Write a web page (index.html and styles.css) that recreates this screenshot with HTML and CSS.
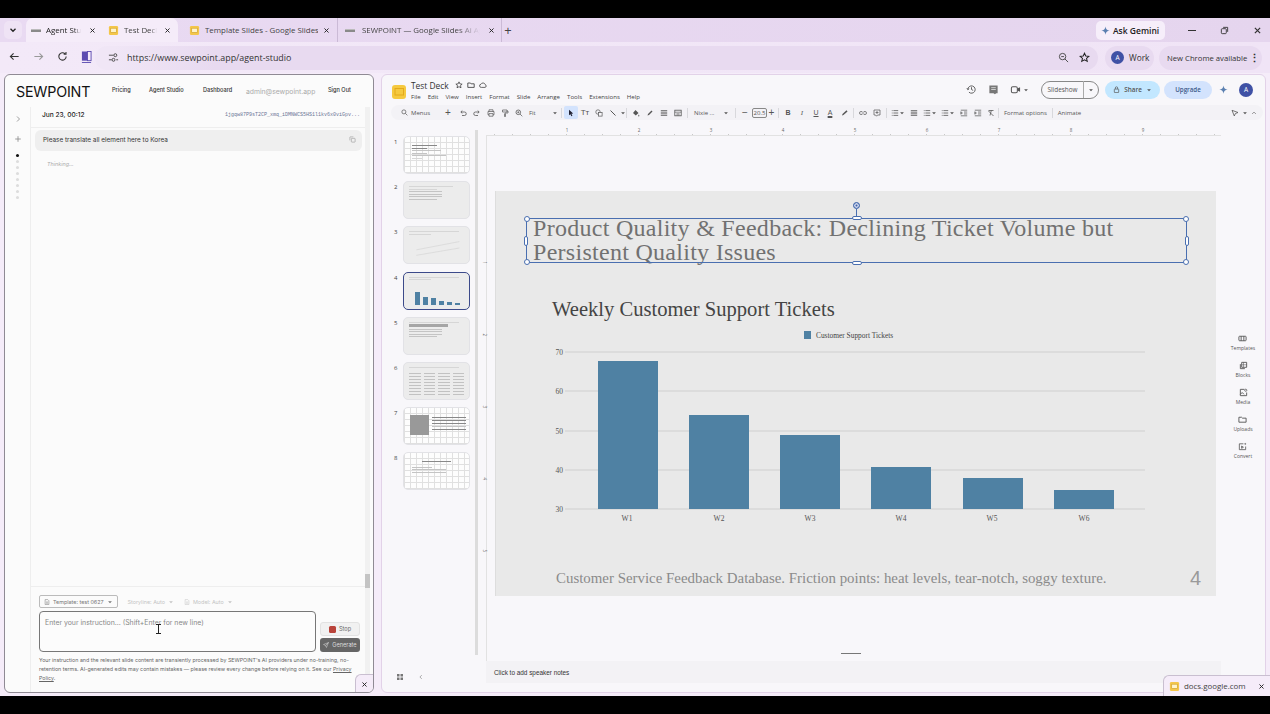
FILE: index.html
```html
<!DOCTYPE html>
<html lang="en">
<head>
    <meta charset="UTF-8">
    <title>Agent Studio</title>
    <link rel="stylesheet" href="styles.css">
</head>
<body>
<svg class="defs" width="0" height="0">
    <symbol id="close" viewBox="0 0 12 12"><path d="M2.5 2.5l7 7M9.5 2.5l-7 7" fill="none" stroke="currentColor" stroke-width="1.6"/></symbol>
    <symbol id="chev" viewBox="0 0 8 8"><path d="M1.5 2.8L4 5.3l2.5-2.5" fill="none" stroke="currentColor" stroke-width="1.3"/></symbol>
    <symbol id="spark" viewBox="0 0 12 12"><path d="M6 .5C6.4 3.8 8.2 5.600 11.5 6 8.2 6.4 6.4 8.2 6 11.5 5.6 8.2 3.8 6.4.5 6 3.8 5.6 5.6 3.8 6 .5z" fill="currentColor"/></symbol>
    <symbol id="star" viewBox="0 0 12 12"><path d="M6 1.3l1.4 3.100 3.300.3-2.500 2.200.8 3.300L6 8.500l-3 1.700.8-3.300-2.500-2.200 3.300-.3z" fill="none" stroke="currentColor" stroke-width="1.1"/></symbol>
    <symbol id="caret" viewBox="0 0 8 8"><path d="M1.5 3h5L4 5.800z" fill="currentColor"/></symbol>
    <symbol id="fav" viewBox="0 0 12 12"><rect x="1" y="1" width="10" height="10" rx="1.5" fill="#f4c64a"/><rect x="3" y="3.5" width="6" height="4.5" fill="#fff3c9" stroke="#c99a22" stroke-width=".6"/></symbol>
    <symbol id="lines" viewBox="0 0 10 10"><path d="M1 2h8M1 4h8M1 6h8M1 8h8" stroke="currentColor" stroke-width="1"/></symbol>
    <symbol id="list" viewBox="0 0 10 10"><path d="M3 2h6M3 5h6M3 8h6M1 2h1M1 5h1M1 8h1" stroke="currentColor" stroke-width="1"/></symbol>
    <symbol id="indent" viewBox="0 0 10 10"><path d="M1 1.5h8M5 3.8h4M5 6.2h4M1 8.5h8M1 3.5L3 5 1 6.5z" stroke="currentColor" stroke-width=".9" fill="none"/></symbol>
    <symbol id="doc" viewBox="0 0 8 8"><path d="M1.5 .8H5l1.500 1.500v5h-5zM2.700 4h2.600M2.700 5.500h2.600" fill="none" stroke="currentColor" stroke-width=".7"/></symbol>
</svg>

<div class="browser">
    <div class="tabstrip">
        <div class="tab-menu"><svg class="ic8"><use href="#chev"/></svg></div>
        <div class="tab tab-a active"><span class="dash"></span><span class="tab-title">Agent Studio</span><svg class="ic7"><use href="#close"/></svg></div>
        <div class="tab tab-b active"><svg class="ic11"><use href="#fav"/></svg><span class="tab-title">Test Deck</span><svg class="ic7"><use href="#close"/></svg></div>
        <div class="tab tab-c"><svg class="ic11"><use href="#fav"/></svg><span class="tab-title">Template Slides - Google Slides</span><svg class="ic7"><use href="#close"/></svg></div>
        <div class="tab tab-d"><span class="dash"></span><span class="tab-title">SEWPOINT — Google Slides Ai Agent</span><svg class="ic7"><use href="#close"/></svg></div>
        <span class="new-tab">+</span>
        <div class="gemini-chip"><svg class="ic9 spark"><use href="#spark"/></svg>Ask Gemini</div>
        <div class="win-btns">
            <span class="win-min"></span>
            <svg class="ic9" viewBox="0 0 10 10"><rect x="1.5" y="3" width="5.5" height="5.5" rx="1" fill="none" stroke="currentColor"/><path d="M3.5 1.5h5v5" fill="none" stroke="currentColor"/></svg>
            <svg class="ic9"><use href="#close"/></svg>
        </div>
    </div>

    <div class="toolbar">
        <div class="nav-btns">
            <svg class="ic11" viewBox="0 0 12 12"><path d="M10.5 6h-9M5 2.500L1.5 6 5 9.5" fill="none" stroke="currentColor" stroke-width="1.2"/></svg>
            <svg class="ic11 dim" viewBox="0 0 12 12"><path d="M1.5 6h9M7 2.500L10.5 6 7 9.5" fill="none" stroke="currentColor" stroke-width="1.2"/></svg>
            <svg class="ic11" viewBox="0 0 12 12"><path d="M10 6a4 4 0 1 1-1.200-2.900M9.800 1v2.500H7.300" fill="none" stroke="currentColor" stroke-width="1.2"/></svg>
            <svg class="ic11 sidepanel" viewBox="0 0 12 14"><rect x="1" y="1" width="6" height="10" fill="#5b4bb0"/><rect x="7" y="1" width="4" height="10" fill="none" stroke="#5b4bb0"/><path d="M1 13h10" stroke="#5b4bb0"/></svg>
        </div>
        <div class="omnibox">
            <svg class="ic11 tune" viewBox="0 0 12 12"><path d="M1 3.500h5M9 8.500h2M1 8.500h3" stroke="currentColor" stroke-width="1"/><circle cx="8" cy="3.5" r="1.6" fill="none" stroke="currentColor"/><circle cx="6" cy="8.5" r="1.6" fill="none" stroke="currentColor"/></svg>
            <span class="url">https://www.sewpoint.app/agent-studio</span>
            <svg class="ic11 omni-zoom" viewBox="0 0 12 12"><circle cx="5" cy="5" r="3.5" fill="none" stroke="currentColor"/><path d="M7.500 7.500l3.500 3.500M3.500 5h3" stroke="currentColor"/></svg>
            <svg class="ic11 omni-star"><use href="#star"/></svg>
        </div>
        <div class="chip chip-work"><span class="avatar">A</span>Work</div>
        <div class="chip chip-update">New Chrome available<span class="dots">⋮</span></div>
    </div>

    <div class="content">
        <section class="agent">
            <header class="agent-head">
                <span class="logo">SEWPOINT</span>
                <nav class="agent-nav">
                    <a class="nav-pricing">Pricing</a>
                    <a class="nav-studio">Agent Studio</a>
                    <a class="nav-dash">Dashboard</a>
                    <a class="nav-mail">admin@sewpoint.app</a>
                    <a>Sign Out</a>
                </nav>
            </header>
            <div class="agent-body">
                <aside class="rail">
                    <svg class="rail-ic" viewBox="0 0 8 8"><path d="M3 1.500L5.500 4 3 6.500" fill="none" stroke="currentColor" stroke-width=".8"/></svg>
                    <svg class="rail-ic plus" viewBox="0 0 8 8"><path d="M4 1.200v5.600M1.200 4h5.600" stroke="currentColor" stroke-width=".8"/></svg>
                    <div class="rail-dots">
                        <i class="on"></i><i></i><i></i><i></i><i></i><i></i><i></i><i></i>
                    </div>
                </aside>
                <div class="thread">
                    <div class="thread-head">
                        <span class="thread-date">Jun 23, 00:12</span>
                        <span class="thread-id">1jgqw87P9sT2CP_xmq_iDMNWCS5HS1l1kv6x0viGpv...</span>
                    </div>
                    <div class="prompt">
                        <span>Please translate all element here to Korea</span>
                        <svg class="copy" viewBox="0 0 8 8"><rect x="2.7" y="2.7" width="4.3" height="4.3" rx=".6" fill="none" stroke="currentColor" stroke-width=".7"/><path d="M1 5V1.500A.5.5 0 0 1 1.500 1H5" fill="none" stroke="currentColor" stroke-width=".7"/></svg>
                    </div>
                    <p class="thinking">Thinking...</p>
                    <div class="composer">
                        <div class="pickers">
                            <span class="picker picker-on"><svg class="ic6"><use href="#doc"/></svg>Template: test 0627<svg class="ic6"><use href="#caret"/></svg></span>
                            <span class="picker">Storyline: Auto<svg class="ic6"><use href="#caret"/></svg></span>
                            <span class="picker"><svg class="ic6"><use href="#doc"/></svg>Model: Auto<svg class="ic6"><use href="#caret"/></svg></span>
                        </div>
                        <div class="input-row">
                            <div class="input">Enter your instruction... (Shift+Enter for new line)<span class="beam"></span></div>
                            <div class="actions">
                                <button class="btn-stop"><i></i>Stop</button>
                                <button class="btn-gen"><svg class="ic6" viewBox="0 0 8 8"><path d="M7.300.7L.7 3.400l2.600 1.300L4.600 7.300zM3.300 4.700L7.300.7" fill="none" stroke="currentColor" stroke-width=".7"/></svg>Generate</button>
                            </div>
                        </div>
                        <p class="legal">Your instruction and the relevant slide content are transiently processed by SEWPOINT's AI providers under no-training, no-retention terms. AI-generated edits may contain mistakes — please review every change before relying on it. See our <u>Privacy Policy</u>.</p>
                    </div>
                </div>
                <div class="agent-scroll"><i></i></div>
            </div>
            <div class="notch notch-left"><svg class="ic7"><use href="#close"/></svg></div>
        </section>

        <section class="slides">
            <header class="slides-head">
                <svg class="deck-logo" viewBox="0 0 14 14"><rect width="14" height="14" rx="3" fill="#f5c93f"/><rect x="3" y="3.5" width="8.5" height="6.5" fill="none" stroke="#e3a91b"/></svg>
                <div class="deck-title">
                    <div class="deck-name">Test Deck
                        <svg class="ic8"><use href="#star"/></svg>
                        <svg class="ic8" viewBox="0 0 10 10"><path d="M1 2.500h3l1 1h4v4.500H1z" fill="none" stroke="currentColor"/></svg>
                        <svg class="ic8" viewBox="0 0 10 10"><path d="M3 8h4.500a1.800 1.800 0 0 0 .2-3.500A2.800 2.800 0 0 0 2.500 4 2 2 0 0 0 3 8z" fill="none" stroke="currentColor" stroke-width=".9"/></svg>
                    </div>
                    <div class="deck-menu">
                        <span>File</span><span>Edit</span><span>View</span><span>Insert</span><span>Format</span><span>Slide</span><span>Arrange</span><span>Tools</span><span>Extensions</span><span>Help</span>
                    </div>
                </div>
                <div class="deck-actions">
                    <svg class="ic11" viewBox="0 0 12 12"><path d="M2 6a4 4 0 1 1 1.200 2.900M1 4.500L2 6.200 3.500 5M6 3.500V6l1.800 1" fill="none" stroke="currentColor"/></svg>
                    <svg class="ic11" viewBox="0 0 12 12"><path d="M1.500 1.500h9v8.500H9L7.500 11.200 6 10H1.500z" fill="#777"/><path d="M3.500 4h5M3.500 6h5" stroke="#fff" stroke-width=".7"/></svg>
                    <span class="meet"><svg class="ic11" viewBox="0 0 12 12"><rect x="1.5" y="3" width="6.5" height="6.5" rx="1.5" fill="none" stroke="currentColor" stroke-width="1.1"/><path d="M8 5l3-1.500v5L8 7z" fill="currentColor"/></svg><svg class="ic6"><use href="#caret"/></svg></span>
                    <div class="slideshow"><span>Slideshow</span><span class="slideshow-arrow"><svg class="ic6"><use href="#caret"/></svg></span></div>
                    <div class="share"><svg class="ic7" viewBox="0 0 8 8"><rect x="1.5" y="3.5" width="5" height="4" rx=".6" fill="none" stroke="currentColor" stroke-width=".8"/><path d="M2.700 3.500V2.200a1.300 1.300 0 0 1 2.600 0v1.300" fill="none" stroke="currentColor" stroke-width=".8"/></svg><span>Share</span><svg class="ic6"><use href="#caret"/></svg></div>
                    <div class="upgrade">Upgrade</div>
                    <svg class="ic9 spark"><use href="#spark"/></svg>
                    <span class="avatar avatar-lg">A</span>
                </div>
            </header>

            <div class="tools">
                <span class="tools-search"><svg class="ic7" viewBox="0 0 8 8"><circle cx="3.3" cy="3.3" r="2.3" fill="none" stroke="currentColor" stroke-width=".8"/><path d="M5 5l2.300 2.300" stroke="currentColor" stroke-width=".8"/></svg>Menus</span>
                <span class="t t-plus">+</span>
                <span class="t"><svg class="ic8" viewBox="0 0 8 8"><path d="M2 3h3.500a1.500 1.500 0 0 1 0 3.500H3M3.300 1.600L1.800 3l1.500 1.400" fill="none" stroke="currentColor" stroke-width=".8"/></svg></span>
                <span class="t"><svg class="ic8" viewBox="0 0 8 8"><path d="M6 3H2.500a1.500 1.500 0 0 0 0 3.500H5M4.700 1.600L6.200 3 4.700 4.400" fill="none" stroke="currentColor" stroke-width=".8"/></svg></span>
                <span class="t"><svg class="ic8" viewBox="0 0 8 8"><path d="M2 2.500V.8h4v1.700M2 5.800H1V2.500h6v3.300H6M2 4.600h4v2.600H2z" fill="none" stroke="currentColor" stroke-width=".7"/></svg></span>
                <span class="t"><svg class="ic8" viewBox="0 0 8 8"><path d="M1.500 1h4.500v2H1.500zM6 2h1v2H4v1.200M3.500 5.200h1v2.300h-1z" fill="none" stroke="currentColor" stroke-width=".7"/></svg></span>
                <span class="t"><svg class="ic8" viewBox="0 0 8 8"><circle cx="3.3" cy="3.3" r="2.3" fill="none" stroke="currentColor" stroke-width=".8"/><path d="M5 5l2.300 2.300M2.300 3.300h2M3.300 2.300v2" stroke="currentColor" stroke-width=".7"/></svg></span>
                <span class="fit">Fit<svg class="ic6"><use href="#caret"/></svg></span>
                <i class="sep"></i>
                <span class="t t-on"><svg class="ic8" viewBox="0 0 8 8"><path d="M2 .8l4.200 3.700-1.800.2 1 2-1 .5-1-2L2 6.300z" fill="currentColor"/></svg></span>
                <span class="t t-text">Tт</span>
                <span class="t"><svg class="ic8" viewBox="0 0 8 8"><circle cx="3" cy="3" r="2.2" fill="none" stroke="currentColor" stroke-width=".7"/><rect x="3.5" y="3.5" width="3.6" height="3.6" fill="#f7f6f9" stroke="currentColor" stroke-width=".7"/></svg></span>
                <span class="t"><svg class="ic8" viewBox="0 0 8 8"><path d="M1.500 1.500l5 5" stroke="currentColor" stroke-width="1"/></svg></span>
                <span class="t-arrow"><svg class="ic6"><use href="#caret"/></svg></span>
                <i class="sep"></i>
                <span class="t"><svg class="ic8" viewBox="0 0 8 8"><path d="M3.500 1L6.500 4 3.800 6.500 1 4zM6.800 5.500l.6 1.300a.6.6 0 1 1-1.200 0z" fill="currentColor"/></svg></span>
                <span class="t"><svg class="ic8" viewBox="0 0 8 8"><path d="M1.500 6.500L2 5l3.500-3.500 1 1L3 6z" fill="currentColor"/></svg></span>
                <span class="t"><svg class="ic8"><use href="#lines"/></svg></span>
                <span class="t"><svg class="ic8" viewBox="0 0 10 10"><rect x="1" y="1.5" width="8" height="7" fill="none" stroke="currentColor"/><path d="M1 4h8M3 6h4M3 7.500h4" stroke="currentColor" stroke-width=".8"/></svg></span>
                <i class="sep"></i>
                <span class="font-name">Nixie ...<svg class="ic6"><use href="#caret"/></svg></span>
                <i class="sep"></i>
                <span class="t t-plus">−</span>
                <span class="size">20.5</span>
                <span class="t t-plus t-tight">+</span>
                <i class="sep"></i>
                <span class="t t-b">B</span>
                <span class="t t-i">I</span>
                <span class="t t-u">U</span>
                <span class="t t-a">A</span>
                <span class="t"><svg class="ic8" viewBox="0 0 8 8"><path d="M2.500 5L2 6.500 3.500 6l4-3.500-1-1.200z" fill="currentColor"/></svg></span>
                <i class="sep"></i>
                <span class="t"><svg class="ic8" viewBox="0 0 8 8"><path d="M3.300 2.500H2a1.500 1.500 0 0 0 0 3h1.300M4.700 2.500H6a1.500 1.500 0 0 1 0 3H4.700M2.700 4h2.600" fill="none" stroke="currentColor" stroke-width=".7"/></svg></span>
                <span class="t"><svg class="ic8" viewBox="0 0 8 8"><path d="M1 1h6v5H4.500L3.500 7.200 2.500 6H1zM4 2v3M2.500 3.500h3" fill="none" stroke="currentColor" stroke-width=".7"/></svg></span>
                <i class="sep"></i>
                <span class="t t-wide"><svg class="ic8"><use href="#list"/></svg><svg class="ic6"><use href="#caret"/></svg></span>
                <span class="t"><svg class="ic8"><use href="#lines"/></svg></span>
                <span class="t t-wide"><svg class="ic8"><use href="#list"/></svg><svg class="ic6"><use href="#caret"/></svg></span>
                <span class="t t-wide"><svg class="ic8"><use href="#list"/></svg><svg class="ic6"><use href="#caret"/></svg></span>
                <span class="t"><svg class="ic8"><use href="#indent"/></svg></span>
                <span class="t"><svg class="ic8"><use href="#indent"/></svg></span>
                <span class="t t-last"><svg class="ic8" viewBox="0 0 8 8"><path d="M1.500 1.500h5M4.300 1.500L3 6.500M1.500 2l5 5" fill="none" stroke="currentColor" stroke-width=".8"/></svg></span>
                <i class="sep"></i>
                <span class="tool-label">Format options</span>
                <i class="sep"></i>
                <span class="tool-label">Animate</span>
                <span class="tools-end">
                    <svg class="ic8" viewBox="0 0 8 8"><path d="M1 1.300l6 2.200-2.600 1L3.300 7z" fill="none" stroke="currentColor" stroke-width=".8"/></svg>
                    <svg class="ic6"><use href="#caret"/></svg>
                    <svg class="ic6" viewBox="0 0 8 8"><path d="M1.500 5.300L4 2.800l2.500 2.500" fill="none" stroke="currentColor" stroke-width=".8"/></svg>
                </span>
            </div>

            <div class="workspace">
                <aside class="film">
                    <div class="film-list">
                        <div class="film-row"><span class="film-num">1</span>
                            <div class="thumb thumb-grid pad-title">
                                <b class="ln w50 dark"></b><b class="ln w30 dark"></b><b class="ln w60"></b><b class="ln w30"></b><b class="ln w70"></b><b class="ln w20 faint"></b>
                            </div>
                        </div>
                        <div class="film-row"><span class="film-num">2</span>
                            <div class="thumb">
                                <b class="ln w80 faint"></b><b class="ln w50 faint"></b><b class="ln w60"></b><b class="ln w60"></b><b class="ln w60"></b><b class="ln w50"></b>
                            </div>
                        </div>
                        <div class="film-row"><span class="film-num">3</span>
                            <div class="thumb">
                                <b class="ln w90 faint"></b><b class="ln w40 faint"></b>
                                <svg class="thumb-lines" viewBox="0 0 60 20"><path d="M8 12L55 3M8 18L55 10" stroke="#cfcfcf" stroke-width=".6" fill="none"/></svg>
                            </div>
                        </div>
                        <div class="film-row"><span class="film-num">4</span>
                            <div class="thumb thumb-active">
                                <b class="ln w90 faint"></b><b class="ln w40 faint"></b>
                                <div class="mini-bars">
                                    <i style="height:13px"></i><i style="height:8px"></i><i style="height:7px"></i><i style="height:4px"></i><i style="height:3px"></i><i style="height:2px"></i>
                                </div>
                            </div>
                        </div>
                        <div class="film-row"><span class="film-num">5</span>
                            <div class="thumb">
                                <b class="ln w90 faint"></b><b class="ln bar w70"></b><b class="ln w60"></b><b class="ln w60"></b><b class="ln w60"></b><b class="ln w50"></b>
                            </div>
                        </div>
                        <div class="film-row"><span class="film-num">6</span>
                            <div class="thumb">
                                <b class="ln w90 faint"></b>
                                <div class="mini-cols"><span></span><span></span><span></span><span></span></div>
                            </div>
                        </div>
                        <div class="film-row"><span class="film-num">7</span>
                            <div class="thumb thumb-grid thumb-split">
                                <span class="mini-block"></span>
                                <div class="mini-text"><b class="ln dark"></b><b class="ln dark"></b><b class="ln dark"></b><b class="ln"></b><b class="ln dark"></b></div>
                            </div>
                        </div>
                        <div class="film-row"><span class="film-num">8</span>
                            <div class="thumb thumb-grid pad-title">
                                <b class="ln w60 dark center"></b><b class="ln w40"></b><b class="ln w70"></b><b class="ln w70"></b>
                            </div>
                        </div>
                    </div>
                    <div class="film-foot">
                        <svg class="ic8" viewBox="0 0 8 8"><path d="M1 1h2.500v2.500H1zM4.500 1H7v2.500H4.500zM1 4.500h2.500V7H1zM4.500 4.500H7V7H4.500z" fill="currentColor"/></svg>
                        <svg class="ic6" viewBox="0 0 8 8"><path d="M5 1.500L2.500 4 5 6.500" fill="none" stroke="currentColor" stroke-width=".8"/></svg>
                    </div>
                </aside>
                <div class="film-scroll"></div>

                <div class="canvas">
                    <div class="ruler-h">
                        <span>1</span><span>2</span><span>3</span><span>4</span><span>5</span><span>6</span><span>7</span><span>8</span><span>9</span>
                    </div>
                    <div class="stage">
                        <div class="ruler-v">
                            <span>1</span><span>2</span><span>3</span><span>4</span><span>5</span>
                        </div>
                        <div class="stage-main">
                            <div class="slide">
                                <h1 class="slide-title">Product Quality &amp; Feedback: Declining Ticket Volume but Persistent Quality Issues</h1>
                                <h2 class="chart-title">Weekly Customer Support Tickets</h2>
                                <svg class="chart" viewBox="0 0 721 210">
                                    <rect x="309" y="3" width="7" height="8" fill="#4f81a3"/>
                                    <text x="321" y="10" class="legend">Customer Support Tickets</text>
                                    <g stroke="#cfcfcf" stroke-width="1">
                                        <path d="M70 24h580M70 63h580M70 103h580M70 142h580M70 181h580"/>
                                    </g>
                                    <g class="axis" text-anchor="end">
                                        <text x="68" y="27">70</text><text x="68" y="66">60</text><text x="68" y="106">50</text><text x="68" y="145">40</text><text x="68" y="184">30</text>
                                    </g>
                                    <g fill="#4f81a3">
                                        <rect x="103" y="33" width="60" height="148"/>
                                        <rect x="194" y="87" width="60" height="94"/>
                                        <rect x="285" y="107" width="60" height="74"/>
                                        <rect x="376" y="139" width="60" height="42"/>
                                        <rect x="468" y="150" width="60" height="31"/>
                                        <rect x="559" y="162" width="60" height="19"/>
                                    </g>
                                    <g class="axis" text-anchor="middle">
                                        <text x="132" y="193">W1</text><text x="224" y="193">W2</text><text x="315" y="193">W3</text><text x="406" y="193">W4</text><text x="497" y="193">W5</text><text x="589" y="193">W6</text>
                                    </g>
                                </svg>
                                <div class="slide-foot">
                                    <span>Customer Service Feedback Database. Friction points: heat levels, tear-notch, soggy texture.</span>
                                    <span class="slide-num">4</span>
                                </div>
                                <div class="selection">
                                    <i class="h-rot"></i>
                                    <i class="h h-tl"></i><i class="h h-tr"></i><i class="h h-bl"></i><i class="h h-br"></i>
                                    <i class="m m-t"></i><i class="m m-b"></i><i class="m m-l"></i><i class="m m-r"></i>
                                </div>
                            </div>
                            <i class="notes-grip"></i>
                        </div>
                    </div>
                    <div class="notes">Click to add speaker notes</div>
                </div>

                <aside class="addons">
                    <div class="addon"><svg class="ic9" viewBox="0 0 10 10"><rect x="1" y="2.5" width="8" height="5" rx=".8" fill="none" stroke="currentColor"/><path d="M3.500 2.500v5M6.500 2.500v5" stroke="currentColor"/></svg>Templates</div>
                    <div class="addon"><svg class="ic9" viewBox="0 0 10 10"><path d="M3 1.500h5.500v5.500H3zM1.500 3.500V8.500H6.500" fill="none" stroke="currentColor"/><path d="M5 1.500V7M3 4.200h5.500" stroke="currentColor" stroke-width=".6"/></svg>Blocks</div>
                    <div class="addon"><svg class="ic9" viewBox="0 0 10 10"><path d="M6 1.500H1.500v7h7V5M1.500 7l2-2 2 2" fill="none" stroke="currentColor"/><circle cx="7.5" cy="2.5" r="1.2" fill="none" stroke="currentColor" stroke-width=".8"/></svg>Media</div>
                    <div class="addon"><svg class="ic9" viewBox="0 0 10 10"><path d="M1 2.500h3l1 1h4v4.500H1z" fill="none" stroke="currentColor"/></svg>Uploads</div>
                    <div class="addon"><svg class="ic9" viewBox="0 0 10 10"><path d="M6 2H1.500v6.500h7V5M4 4.500l2 1.300L4 7z" fill="none" stroke="currentColor" stroke-width=".9"/><path d="M8 .8l.4 1 1 .4-1 .4-.4 1-.4-1-1-.4 1-.4z" fill="currentColor"/></svg>Convert</div>
                </aside>
            </div>
        </section>
        <div class="notch notch-right"><svg class="ic11"><use href="#fav"/></svg><span>docs.google.com</span><svg class="ic7"><use href="#close"/></svg></div>
    </div>
</div>
</body>
</html>
```

FILE: styles.css
```css
*{
    margin: 0;
    padding: 0;
    box-sizing: border-box;
}
html,body{
    width: 100%;
    height: 100%;
    overflow: hidden;
}
body{
    background: #000;
    padding-top: 18px;
    font-family: "Open Sans", "Noto Sans", sans-serif;
    color: #333;
}
.defs{
    position: absolute;
}
svg{
    flex: none;
    display: block;
}
.ic6{ width: 6px; height: 6px; }
.ic7{ width: 7px; height: 7px; }
.ic8{ width: 8px; height: 8px; }
.ic9{ width: 9px; height: 9px; }
.ic11{ width: 11px; height: 11px; }
.spark{ color: #5a7fb0; }

.browser{
    height: 678px;
    background: #f5ecf9;
    display: flex;
    flex-direction: column;
}

/* tab strip */
.tabstrip{
    height: 24px;
    display: flex;
    align-items: center;
    background: linear-gradient(90deg, #e9daf2, #e5d5ee);
    padding-left: 4px;
    font-size: 7.9px;
    color: #444;
}
.tab-menu{
    width: 18px;
    height: 18px;
    border-radius: 5px;
    background: #efe3f5;
    display: flex;
    align-items: center;
    justify-content: center;
    margin-right: 4px;
    color: #222;
}
.tab{
    height: 24px;
    display: flex;
    align-items: center;
    gap: 5px;
    padding-left: 5px;
    padding-right: 5px;
}
.tab .ic7{ color: #222; margin-left: auto; }
.tab.active{ background: #f5ecf9; }
.tab-a{ width: 74px; border-radius: 7px 0 0 0; color: #222; padding-right: 4px; }
.tab-b{ width: 78px; border-radius: 0 7px 0 0; padding-left: 8px; padding-right: 7px; }
.tab-c{ width: 158px; padding-left: 9px; margin-left: 2px; padding-right: 7px; border-right: 1px solid #cbbad6; }
.tab-d{ width: 162px; margin-left: 2px; border-right: 1px solid #cbbad6; padding-right: 6px; }
.tab-c .tab-title{ width: 116px; }
.tab-d .tab-title{ width: 118px; margin-left: 2px; }
.tab-a .tab-title{ width: 35px; }
.tab-b .tab-title{ width: 33px; }
.tab-title{
    white-space: nowrap;
    overflow: hidden;
    -webkit-mask-image: linear-gradient(90deg, #000 80%, transparent);
}
.tab-c .tab-title{ -webkit-mask-image: none; }
.dash{
    width: 10px;
    height: 3px;
    background: #8a8a8a;
    flex: none;
    border-top: 1px solid #bbb;
}
.new-tab{
    font-size: 13px;
    margin-left: -1px;
    width: 14px;
    text-align: center;
}
.gemini-chip{
    margin-left: auto;
    width: 69px;
    height: 19px;
    border-radius: 5px;
    background: #f6eefa;
    display: flex;
    align-items: center;
    gap: 3px;
    padding-left: 5px;
    font-size: 8.5px;
    font-weight: 600;
    color: #222;
}
.win-btns{
    width: 105px;
    padding-left: 23px;
    padding-right: 8px;
    display: flex;
    align-items: center;
    justify-content: space-between;
    color: #333;
}
.win-min{
    width: 8px;
    height: 1px;
    background: #333;
}

/* address bar */
.toolbar{
    height: 31px;
    display: flex;
    align-items: center;
    padding-left: 9px;
    background: linear-gradient(90deg, #f3e9f8, #f0e4f6);
}
.nav-btns{
    width: 86px;
    display: flex;
    gap: 13px;
    color: #333;
}
.nav-btns .dim{ color: #999; }
.sidepanel{ height: 14px; width: 11px; margin-top: -1px; }
.omnibox{
    width: 1003px;
    height: 24px;
    border-radius: 12px;
    background: linear-gradient(90deg, #f0e6f6 2%, #e8daf0 12%);
    display: flex;
    align-items: center;
    padding-left: 13px;
    padding-right: 8px;
    color: #444;
}
.url{
    margin-left: 8px;
    font-size: 8.9px;
    color: #333;
}
.omni-zoom{ margin-left: auto; }
.omni-star{ margin-left: 10px; color: #222; }
.chip{
    height: 24px;
    border-radius: 12px;
    background: #e8daf0;
    display: flex;
    align-items: center;
    font-size: 8.3px;
    color: #333;
    white-space: nowrap;
}
.chip-work{
    width: 49px;
    margin-left: 7px;
    padding-left: 6px;
    gap: 5px;
}
.chip-update{
    width: 103px;
    margin-left: 5px;
    padding-left: 8px;
    font-size: 7.7px;
}
.dots{
    margin-left: 2px;
    font-size: 11px;
    font-weight: 700;
}
.avatar{
    width: 13px;
    height: 13px;
    border-radius: 50%;
    background: #3f51a5;
    color: #fff;
    font-size: 6.5px;
    display: flex;
    align-items: center;
    justify-content: center;
}

/* panels */
.content{
    flex: 1;
    position: relative;
    display: flex;
    gap: 7px;
    padding: 1px 4px 3px 4px;
}
.agent{
    width: 370px;
    position: relative;
    background: #fbfbfb;
    border: 1px solid #8f8a94;
    border-radius: 6px;
    display: flex;
    flex-direction: column;
    font-family: "Inter", "Open Sans", sans-serif;
    overflow: hidden;
}
.agent-head{
    height: 32px;
    display: flex;
    align-items: center;
    padding-left: 11px;
}
.logo{
    font-family: "Inter", "Liberation Sans", sans-serif;
    font-size: 14.3px;
    letter-spacing: -.2px;
    color: #111;
    width: 96px;
}
.agent-nav{
    display: flex;
    font-size: 5.6px;
    font-weight: 500;
    color: #333;
    white-space: nowrap;
}
.agent-nav a{ display: block; }
.nav-pricing{ width: 37px; }
.nav-studio{ width: 54px; }
.nav-dash{ width: 43px; }
.nav-mail{ width: 82px; color: #aaa; font-size: 6.8px; font-weight: 400; }

.agent-body{
    flex: 1;
    display: flex;
    min-height: 0;
}
.rail{
    width: 26px;
    border-right: 1px solid #eee;
    display: flex;
    flex-direction: column;
    align-items: center;
    color: #888;
    padding-top: 8px;
}
.rail-ic{ width: 8px; height: 8px; }
.plus{ margin-top: 12px; }
.rail-dots{
    margin-top: 11px;
    display: flex;
    flex-direction: column;
    gap: 3px;
    align-items: center;
}
.rail-dots i{
    width: 3px;
    height: 3px;
    border-radius: 50%;
    background: #ddd;
}
.rail-dots .on{ background: #111; }
.thread{
    flex: 1;
    display: flex;
    flex-direction: column;
    min-width: 0;
}
.thread-head{
    height: 21px;
    display: flex;
    align-items: center;
    justify-content: space-between;
    padding: 0 5px 5px 11px;
    border-bottom: 1px solid #eee;
}
.thread-date{
    font-size: 6.6px;
    font-weight: 500;
    color: #222;
}
.thread-id{
    font-family: "Liberation Mono", monospace;
    font-size: 5px;
    color: #6a7596;
}
.prompt{
    margin: 2px 3px 0 4px;
    height: 21px;
    border-radius: 6px;
    background: #efefef;
    display: flex;
    align-items: center;
    justify-content: space-between;
    padding: 0 6px 2px 8px;
    font-size: 6.4px;
    color: #333;
}
.copy{
    width: 7px;
    height: 7px;
    color: #999;
}
.thinking{
    margin: 10px 0 0 16px;
    font-size: 5.4px;
    font-style: italic;
    color: #aaa;
}
.composer{
    margin-top: auto;
    height: 106px;
    border-top: 1px solid #eee;
    padding: 8px 3px 0 8px;
}
.pickers{
    display: flex;
    gap: 10px;
}
.picker{
    height: 13px;
    display: flex;
    align-items: center;
    gap: 3px;
    font-size: 5.4px;
    color: #c4c4c4;
}
.picker-on{
    border: 1px solid #bbb;
    border-radius: 2px;
    padding: 0 4px;
    color: #777;
}
.input-row{
    margin-top: 3px;
    display: flex;
    gap: 4px;
}
.input{
    width: 277px;
    height: 41px;
    border: 1px solid #777;
    border-radius: 4px;
    padding: 6px 5px;
    font-size: 6.9px;
    color: #888;
    position: relative;
    background: #fcfcfc;
}
.beam{
    position: absolute;
    left: 116px;
    top: 12px;
    width: 5px;
    height: 10px;
    border-top: 1px solid #222;
    border-bottom: 1px solid #222;
    background: linear-gradient(#222, #222) center / 1px 100% no-repeat;
}
.actions{
    width: 40px;
    padding-top: 11px;
    display: flex;
    flex-direction: column;
    gap: 2px;
}
.actions button{
    height: 14px;
    border-radius: 3px;
    font-family: inherit;
    font-size: 5.6px;
    display: flex;
    align-items: center;
    justify-content: center;
    gap: 3px;
    white-space: nowrap;
}
.btn-stop{
    border: 1px solid #e2e2e2;
    background: #f1f1f1;
    color: #666;
}
.btn-stop i{
    width: 7px;
    height: 7px;
    border-radius: 1.5px;
    background: #b9433a;
}
.btn-gen{
    border: 0;
    background: #666;
    color: #ddd;
}
.legal{
    margin-top: 4px;
    width: 318px;
    font-size: 5.3px;
    line-height: 9px;
    color: #666;
}
.agent-scroll{
    width: 5px;
    background: #f1f1f1;
    margin-right: 3px;
}
.agent-scroll i{
    display: block;
    height: 14px;
    margin-top: 467px;
    background: #c4c4c4;
}

.notch{
    position: absolute;
    display: flex;
    align-items: center;
    background: #f5ecf9;
    border-top: 1px solid #c9bfd0;
    border-left: 1px solid #c9bfd0;
    border-radius: 6px 0 0 0;
}
.notch-left{
    right: 0;
    bottom: -1px;
    width: 18px;
    height: 19px;
    justify-content: center;
    color: #222;
}
.notch-right{
    right: 0;
    bottom: 0;
    width: 107px;
    height: 21px;
    padding-left: 5px;
    gap: 4px;
    font-size: 7.9px;
    color: #444;
}
.notch-right .ic7{
    margin-left: 8px;
    color: #222;
}

/* slides */
.slides{
    flex: 1;
    min-width: 0;
    background: #f8f7fa;
    border: 1px solid #e2d2e8;
    border-radius: 6px;
    display: flex;
    flex-direction: column;
    color: #444;
}
.slides-head{
    height: 32px;
    display: flex;
    align-items: center;
    padding: 0 12px 0 10px;
}
.deck-logo{
    width: 14px;
    height: 14px;
    margin-top: 2px;
}
.deck-title{
    margin-left: 5px;
    margin-top: -2px;
}
.deck-name{
    display: flex;
    align-items: center;
    gap: 4px;
    font-size: 8.4px;
    color: #333;
}
.deck-name svg:first-of-type{ margin-left: 2px; }
.deck-menu{
    display: flex;
    gap: 7px;
    font-size: 6.1px;
    color: #444;
    margin-top: 1px;
}
.deck-actions{
    margin-left: auto;
    display: flex;
    align-items: center;
    color: #555;
    gap: 11px;
    margin-top: -3px;
}
.meet{
    display: flex;
    align-items: center;
    gap: 2px;
    margin-right: 1px;
}
.slideshow{
    width: 58px;
    height: 18px;
    border: 1px solid #888;
    border-radius: 9px;
    display: flex;
    align-items: center;
    font-size: 6.4px;
    margin-right: -5px;
}
.slideshow span:first-child{
    flex: 1;
    text-align: center;
    border-right: 1px solid #aaa;
    line-height: 17px;
}
.slideshow-arrow{
    width: 14px;
    display: flex;
    justify-content: center;
}
.share{
    width: 55px;
    height: 18px;
    border-radius: 9px;
    background: #c2e7ff;
    display: flex;
    align-items: center;
    justify-content: center;
    gap: 4px;
    font-size: 6.4px;
    font-weight: 600;
    margin-right: -7px;
}
.upgrade{
    width: 48px;
    height: 18px;
    border-radius: 9px;
    background: #d3e3fd;
    display: flex;
    align-items: center;
    justify-content: center;
    font-size: 6.2px;
    font-weight: 600;
    color: #3d5a8a;
    margin-right: -4px;
}
.avatar-lg{
    width: 14px;
    height: 14px;
}

.tools{
    height: 15px;
    display: flex;
    align-items: center;
    margin: -2px 2px 0 9px;
    padding-left: 8px;
    border-radius: 8px;
    background: #f3f2f6;
    font-size: 6px;
    color: #555;
}
.tools-search{
    width: 42px;
    height: 15px;
    display: flex;
    align-items: center;
    gap: 3px;
    padding-left: 2px;
}
.t{
    width: 14px;
    height: 13px;
    flex: none;
    display: flex;
    align-items: center;
    justify-content: center;
    font-family: "Liberation Sans", sans-serif;
}
.t-plus{
    font-size: 10px;
    width: 14px;
}
.t-tight{
    width: 9px;
}
.t-last{
    width: 11px;
}
.tools-search + .t-plus{ margin-right: 1px; }
.fit{
    width: 33px;
    display: flex;
    align-items: center;
    justify-content: space-between;
    padding: 0 1px 0 3px;
}
.sep{
    width: 1px;
    height: 10px;
    background: #d8d8dc;
    margin: 0 2px;
    flex: none;
}
.t-on{
    background: #d3e3fd;
    border-radius: 2px;
    color: #223;
}
.t-text{ font-size: 8px; }
.t-arrow{ width: 4px; }
.font-name{
    width: 43px;
    display: flex;
    align-items: center;
    justify-content: space-between;
    padding: 0 4px;
    white-space: nowrap;
}
.size{
    width: 15px;
    height: 10px;
    border: 1px solid #888;
    border-radius: 2px;
    font-size: 6px;
    line-height: 8px;
    text-align: center;
    flex: none;
}
.t-b{ font-weight: 700; font-size: 7px; }
.t-i{ font-style: italic; font-size: 7px; font-family: "Liberation Serif", serif; }
.t-u{ text-decoration: underline; font-size: 7px; }
.t-a{ font-size: 7px; text-decoration: underline; text-decoration-thickness: 1.5px; }
.t-wide{ width: 18px; }
.tool-label{
    font-size: 6px;
    padding: 0 3px;
    white-space: nowrap;
}
.tools-end{
    margin-left: auto;
    display: flex;
    align-items: center;
    gap: 3px;
    padding-right: 6px;
}

.workspace{
    flex: 1;
    min-height: 0;
    display: flex;
    margin-top: 6px;
}
.film{
    width: 93px;
    display: flex;
    flex-direction: column;
}
.film-list{
    flex: 1;
    padding-top: 10px;
    display: flex;
    flex-direction: column;
    gap: 7.2px;
}
.film-row{
    display: flex;
    padding-left: 12px;
    gap: 5px;
}
.film-num{
    width: 4px;
    font-size: 6px;
    margin-top: 2px;
    color: #444;
}
.thumb{
    width: 67px;
    height: 38px;
    border: 1px solid #e2e2e6;
    border-radius: 5px;
    background: #ececec;
    padding: 4px 5px;
    display: flex;
    flex-direction: column;
    gap: 1.5px;
    overflow: hidden;
    flex: none;
    position: relative;
}
.thumb-grid{
    background-color: #fdfdfd;
    background-image:
        repeating-linear-gradient(90deg, #e0e0e0 0 1px, transparent 1px 6px),
        repeating-linear-gradient(0deg, #e0e0e0 0 1px, transparent 1px 6px);
}
.thumb-active{
    border: 1.5px solid #3c4a8a;
}
.pad-title{ padding: 8px 8px; }
.ln{
    display: block;
    height: 1px;
    background: #c4c4c4;
    flex: none;
}
.ln.dark{ background: #888; }
.ln.faint{ background: #d6d6d6; }
.ln.bar{ height: 3px; background: #a5a5a5; }
.ln.center{ margin: 0 auto 3px; }
.w20{ width: 20%; }
.w30{ width: 30%; }
.w40{ width: 40%; }
.w50{ width: 50%; }
.w60{ width: 60%; }
.w70{ width: 70%; }
.w80{ width: 80%; }
.w90{ width: 90%; }
.thumb-lines{
    width: 100%;
    height: 20px;
    margin-top: 2px;
}
.mini-bars{
    display: flex;
    align-items: flex-end;
    gap: 3px;
    height: 20px;
    padding-left: 6px;
    margin-top: 3px;
}
.mini-bars i{
    width: 5px;
    background: #4f81a3;
}
.mini-cols{
    flex: 1;
    margin-top: 3px;
    display: grid;
    grid-template-columns: repeat(4, 1fr);
    gap: 3px;
}
.mini-cols span{
    background: repeating-linear-gradient(0deg, #c2c2c2 0 1px, transparent 1px 3px);
}
.thumb-split{
    flex-direction: row;
    gap: 3px;
    padding: 7px 3px 5px 6px;
}
.mini-block{
    width: 19px;
    height: 20px;
    background: #999;
    flex: none;
}
.mini-text{
    flex: 1;
    display: flex;
    flex-direction: column;
    gap: 2px;
    padding-top: 2px;
}
.film-foot{
    height: 31px;
    display: flex;
    align-items: center;
    gap: 14px;
    padding-left: 14px;
    color: #777;
}
.film-scroll{
    width: 3px;
    height: 525px;
    margin-top: 4px;
    background: #dcdcdc;
    flex: none;
}

.canvas{
    flex: 1;
    min-width: 0;
    display: flex;
    flex-direction: column;
    margin-left: 5px;
}
.ruler-h{
    height: 10px;
    display: flex;
    padding-left: 45px;
    font-size: 4.5px;
    color: #666;
    line-height: 8px;
    text-align: center;
    border-bottom: 1px solid #e2e2e2;
    margin-left: 3px;
    background: repeating-linear-gradient(90deg, #c9c9c9 0 1px, transparent 1px 18px) 8px 8px / auto 2px no-repeat;
}
.ruler-h span{ width: 72px; flex: none; }
.stage{
    flex: 1;
    min-height: 0;
    display: flex;
}
.ruler-v{
    width: 4px;
    padding-top: 91px;
    border-right: 1px solid #e2e2e2;
    font-size: 4.5px;
    color: #666;
    display: flex;
    flex-direction: column;
}
.ruler-v span{
    height: 72px;
    line-height: 72px;
    flex: none;
    transform: rotate(90deg);
}
.stage-main{
    flex: 1;
    padding-top: 55px;
    padding-left: 8px;
    position: relative;
}
.slide{
    width: 721px;
    height: 405px;
    background: #e9e9e9;
    position: relative;
    border-left: 1px solid #ddd;
    font-family: "Liberation Serif", serif;
}
.slide-title{
    position: absolute;
    left: 37px;
    top: 25px;
    width: 640px;
    font-weight: 400;
    font-size: 24px;
    line-height: 24px;
    letter-spacing: .28px;
    color: #717171;
}
.chart-title{
    position: absolute;
    left: 56px;
    top: 107px;
    font-weight: 400;
    font-size: 20.6px;
    color: #444;
    white-space: nowrap;
}
.chart{
    position: absolute;
    left: -1px;
    top: 137px;
    width: 721px;
    height: 210px;
}
.legend{
    font-size: 7.4px;
    fill: #444;
    font-family: "Liberation Serif", serif;
}
.axis text{
    font-size: 7.5px;
    fill: #555;
    font-family: "Liberation Serif", serif;
}
.slide-foot{
    position: absolute;
    left: 60px;
    right: 15px;
    top: 379px;
    display: flex;
    justify-content: space-between;
    align-items: baseline;
    font-size: 14.9px;
    color: #8b8b8b;
    white-space: nowrap;
}
.slide-num{
    font-family: "Liberation Sans", sans-serif;
    font-size: 20px;
    color: #9a9a9a;
    line-height: 10px;
    position: relative;
    top: 2px;
}
.selection{
    position: absolute;
    left: 30px;
    top: 27px;
    width: 661px;
    height: 45px;
    border: 1.5px solid #4a6fb0;
}
.h, .m, .h-rot{
    position: absolute;
    background: #fff;
    border: 1px solid #4a6fb0;
}
.h{
    width: 6px;
    height: 6px;
    border-radius: 50%;
}
.h-tl{ left: -3px; top: -3px; }
.h-tr{ right: -3px; top: -3px; }
.h-bl{ left: -3px; bottom: -3px; }
.h-br{ right: -3px; bottom: -3px; }
.m{ border-radius: 2px; }
.m-t, .m-b{
    width: 10px;
    height: 4px;
    left: 325px;
}
.m-t{ top: -3px; }
.m-b{ bottom: -3px; }
.m-l, .m-r{
    width: 4px;
    height: 10px;
    top: 17px;
}
.m-l{ left: -3px; }
.m-r{ right: -3px; }
.h-rot{
    width: 7px;
    height: 7px;
    border-radius: 50%;
    left: 326px;
    top: -17px;
    background: #3f5fa8;
    box-shadow: inset 0 0 0 1.5px #cfd8ee;
}
.h-rot:after{
    content: "";
    position: absolute;
    left: 2px;
    top: 6px;
    width: 1px;
    height: 8px;
    background: #4a6fb0;
}
.notes-grip{
    position: absolute;
    left: 354px;
    top: 517px;
    width: 20px;
    height: 1px;
    background: #777;
}
.notes{
    height: 22px;
    margin-bottom: 9px;
    margin-left: 3px;
    background: #f3f2f5;
    padding-left: 8px;
    display: flex;
    align-items: center;
    font-family: "Liberation Sans", sans-serif;
    font-size: 6.4px;
    color: #333;
}
.addons{
    width: 44px;
    padding-top: 208px;
    display: flex;
    flex-direction: column;
    align-items: center;
    gap: 6px;
    font-size: 5px;
    color: #666;
}
.addon{
    height: 21px;
    display: flex;
    flex-direction: column;
    align-items: center;
    gap: 2px;
    color: #555;
}
```
